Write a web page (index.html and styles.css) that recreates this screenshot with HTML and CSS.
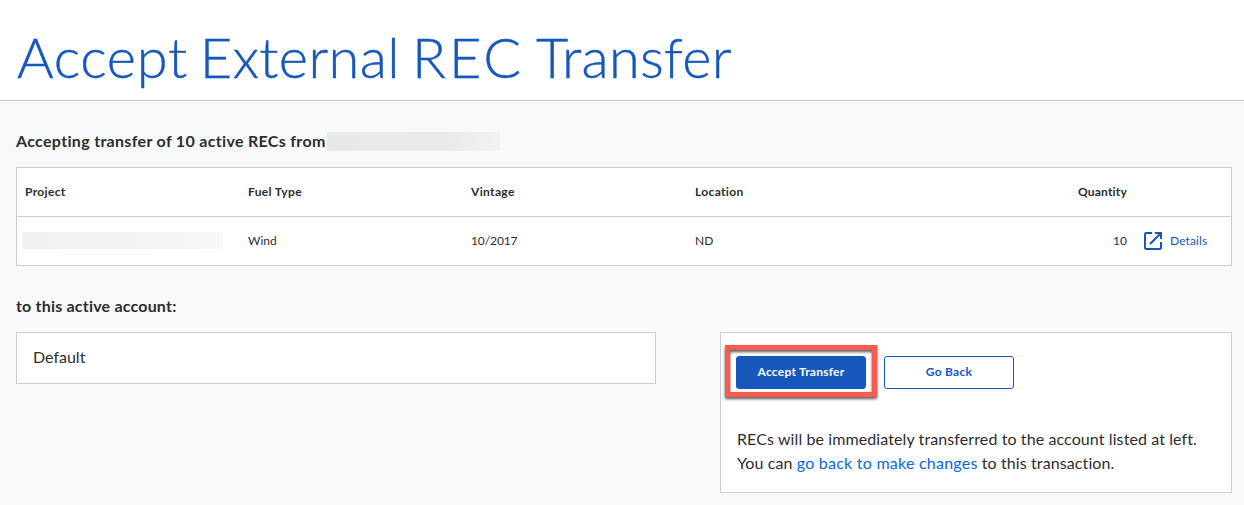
FILE: index.html
```html
<!DOCTYPE html>
<html lang="en">
<head>
<meta charset="utf-8">
<title>Accept External REC Transfer</title>
<link rel="stylesheet" href="styles.css">
</head>
<body>
<header class="page-header"><h1 class="page-title"><span>Accept</span> <span class="title-external">External</span> <span class="title-rec">REC</span> <span class="title-transfer">Transfer</span></h1></header>
<main class="content">
  <h2 class="section-title source-title">Accepting transfer of 10 active RECs from<span class="redacted redacted-sender"></span></h2>
  <section class="transfer-table">
    <div class="row row-head">
      <span>Project</span><span>Fuel Type</span><span>Vintage</span><span>Location</span><span class="quantity">Quantity</span>
    </div>
    <div class="row">
      <span class="redacted redacted-project"></span><span>Wind</span><span class="vintage">10/2017</span><span>ND</span><span class="quantity">10</span>
      <a class="details"><svg class="details-icon" viewBox="0 0 18 18" width="18" height="18"><path d="M8 1H2.2Q1 1 1 2.2V15.8Q1 17 2.2 17H15.8Q17 17 17 15.8V10M11 1H17V7M17 1L6 12" fill="none" stroke="currentColor" stroke-width="2"/></svg><span>Details</span></a>
    </div>
  </section>
  <h2 class="section-title">to this active account:</h2>
  <div class="columns">
    <div class="account">Default</div>
    <section class="actions">
      <div class="buttons">
        <div class="accept-wrap"><button class="btn btn-primary">Accept Transfer</button><span class="highlight"></span></div>
        <button class="btn btn-outline">Go Back</button>
      </div>
      <p class="note">RECs will be immediately transferred to the account listed at left.<br>You can <a class="note-link">go back to make changes</a> to this transaction.</p>
    </section>
  </div>
</main>
</body>
</html>
```
FILE: styles.css
```css
* { box-sizing: border-box; }
body {
  margin: 0;
  height: 505px;
  overflow: hidden;
  background: #f8f9fb;
  color: #2d2d2d;
  font-family: Lato, "Open Sans", sans-serif;
  font-size: 16px;
}
.page-header {
  height: 101px;
  padding: 21px 17px 0;
  background: #fff;
  border-bottom: 1px solid #c8c9cb;
}
.page-title {
  margin: 0;
  color: #1557bb;
  font-size: 56px;
  font-weight: 300;
  line-height: 72px;
  letter-spacing: 0.7px;
  word-spacing: -4px;
  white-space: nowrap;
  -webkit-text-stroke: 0.4px #1557bb;
}
.title-external { letter-spacing: 0.4px; }
.title-rec { letter-spacing: 2.9px; }
.title-transfer { letter-spacing: 0.3px; }
.content { padding: 27px 12px 0 16px; }
.section-title {
  display: flex;
  align-items: center;
  height: 24px;
  margin: 0;
  font-size: 16px;
  font-weight: 700;
  letter-spacing: 0.2px;
  white-space: nowrap;
}
.source-title { letter-spacing: 0.32px; }
.redacted { display: block; }
.redacted-sender {
  width: 173px;
  height: 19px;
  margin: 3px 0 0 1px;
  background: linear-gradient(90deg, #e7e8e9, #e9eaea 70%, #f1f2f3);
}
.redacted-project {
  width: 200px;
  height: 17px;
  margin-left: -2px;
  background: linear-gradient(90deg, #f1f1f1, #f3f3f3 50%, #f7f7f7);
}
.transfer-table {
  margin: 15px 0 27px;
  border: 1px solid #ccc;
  background: #fff;
  font-size: 12px;
}
.row {
  display: grid;
  grid-template-columns: 223px 223px 224px 360px 72px 1fr;
  align-items: center;
  height: 48px;
  padding: 0 0 2px 8px;
}
.row-head {
  height: 49px;
  border-bottom: 1px solid #ccc;
  font-weight: 700;
  letter-spacing: 0.35px;
}
.row-head .quantity { letter-spacing: 0.2px; }
.vintage { letter-spacing: -0.1px; }
.quantity { text-align: right; }
.details {
  display: flex;
  align-items: center;
  gap: 8px;
  margin-left: 17px;
  color: #1557bb;
  letter-spacing: 0.1px;
}
.details-icon { position: relative; top: 1px; }
.columns {
  display: grid;
  grid-template-columns: 640px 512px;
  gap: 64px;
  align-items: start;
  margin-top: 15px;
}
.account, .actions { border: 1px solid #ccc; background: #fff; }
.account { height: 52px; padding: 0 16px; line-height: 47px; }
.actions { height: 161px; padding: 23px 15px 0; }
.buttons { display: flex; gap: 18px; }
.accept-wrap { position: relative; height: 33px; }
.btn {
  display: block;
  width: 130px;
  height: 33px;
  padding: 0 0 3px;
  border: 1px solid #1557bb;
  border-radius: 3px;
  font: 700 12px Lato, "Open Sans", sans-serif;
  letter-spacing: 0.25px;
}
.btn-primary { background: #1557bb; color: #fff; }
.btn-outline { background: #fff; color: #1557bb; }
.highlight {
  position: absolute;
  inset: -11px -11px -8px;
  border: 5px solid #fb5b4e;
  filter: drop-shadow(0 2px 1.5px rgba(0, 0, 0, 0.65));
}
.note {
  margin: 38px 0 0 1px;
  line-height: 24px;
  letter-spacing: 0.1px;
  white-space: nowrap;
}
.note-link { color: #0866e8; letter-spacing: 0.24px; }
```
